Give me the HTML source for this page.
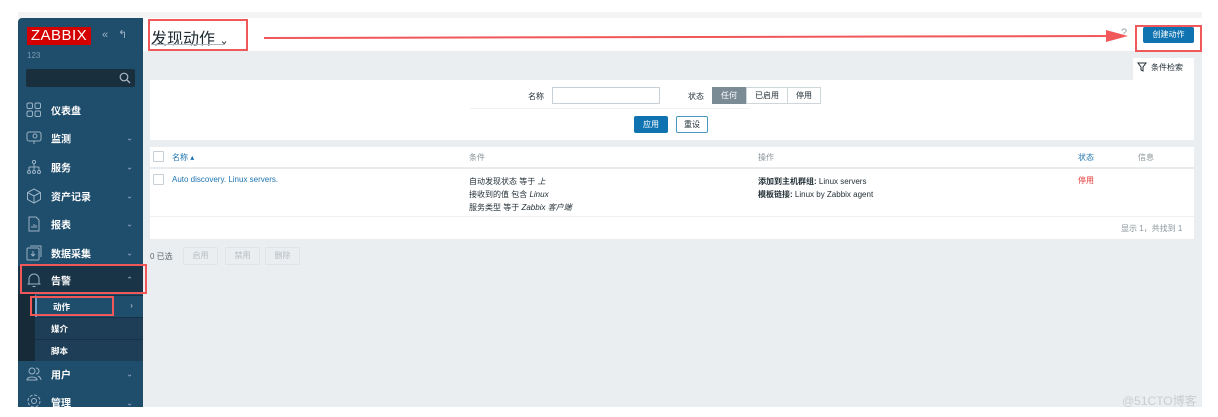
<!DOCTYPE html>
<html><head><meta charset="utf-8">
<style>
*{margin:0;padding:0;box-sizing:border-box}
body{width:1218px;height:417px;background:#fff;position:relative;overflow:hidden;font-family:"Liberation Sans","Noto Sans CJK SC",sans-serif;font-size:9px;color:#1f2c33}
.abs{position:absolute}
#strip{left:18px;top:12px;width:1184px;height:6px;background:#f4f4f4}
#side{left:18px;top:18px;width:125px;height:389px;background:#1f4d6c;border-radius:4px 0 0 0}
#logo{left:27px;top:27px;width:64px;height:18px;background:#d40000;color:#fff;font-size:15px;line-height:18px;text-align:center;letter-spacing:0.5px}
.mi{position:absolute;left:18px;width:125px;height:28px;color:#fff;font-size:10px;font-weight:bold}
.mi span{position:absolute;left:33px;top:50%;transform:translateY(-50%)}
.mi i{position:absolute;right:10px;top:50%;transform:translateY(-50%);font-style:normal;color:#9bb3c5;font-size:8px;font-weight:normal}
.mi svg{position:absolute;left:8px;top:50%;transform:translateY(-50%)}
.sub{position:absolute;left:35px;width:108px;height:22px;color:#fff;font-size:8.5px;font-weight:bold;background:#1d3e56;border-top:1px solid #173247}
.sub span{position:absolute;left:16px;top:5px}
#main{left:143px;top:18px;width:1059px;height:389px;background:#ebeef0}
#head{left:143px;top:18px;width:1059px;height:33px;background:#fff}
.white{background:#fff}
.btn{position:absolute;font-size:8px;text-align:center;border-radius:2px}
.red{position:absolute;border:2px solid #f0585a}
.cb{position:absolute;width:11px;height:11px;border:1px solid #c8d0d6;background:#fff;border-radius:1px}
.gbtn{position:absolute;top:247px;height:18px;border:1px solid #dfe4e7;background:#ebeef0;color:#b6bdc2;font-size:8px;line-height:16px;text-align:center;border-radius:2px}
</style></head><body>
<div class="abs" id="strip"></div>
<div class="abs" id="main"></div>
<div class="abs" id="head"></div>
<div class="abs" id="side"></div>
<div class="abs" id="logo">ZABBIX</div>
<div class="abs" style="left:102px;top:29px;color:#9bb3c5;font-size:11px">«</div>
<div class="abs" style="left:118px;top:28px;color:#9bb3c5;font-size:11px">↰</div>
<div class="abs" style="left:27px;top:51px;color:#7f9cb2;font-size:8px">123</div>
<div class="abs" style="left:26px;top:69px;width:109px;height:18px;background:#1a2f3e;border-radius:2px"></div>
<svg class="abs" style="left:119px;top:72px" width="12" height="12"><circle cx="5" cy="5" r="3.8" fill="none" stroke="#aab9c5" stroke-width="1.2"/><line x1="8" y1="8" x2="11" y2="11" stroke="#aab9c5" stroke-width="1.3"/></svg>

<div class="mi" style="top:96px"><svg width="16" height="16"><g fill="none" stroke="#9bb3c5"><rect x="1" y="1" width="5.5" height="5.5" rx="1.5"/><rect x="9" y="1" width="5.5" height="5.5" rx="1.5"/><rect x="1" y="9" width="5.5" height="5.5" rx="1.5"/><rect x="9" y="9" width="5.5" height="5.5" rx="1.5"/></g></svg><span>仪表盘</span></div>
<div class="mi" style="top:124px"><svg width="16" height="16"><g fill="none" stroke="#9bb3c5"><rect x="1" y="2" width="14" height="9" rx="2"/><circle cx="9" cy="6" r="2"/><line x1="8" y1="14" x2="8" y2="11"/></g></svg><span>监测</span><i>⌄</i></div>
<div class="mi" style="top:153px"><svg width="16" height="16"><g fill="none" stroke="#9bb3c5"><circle cx="8" cy="3" r="1.6"/><path d="M8 5v3M3 8h10M3 8v3M8 8v3M13 8v3"/><circle cx="3" cy="13" r="1.5"/><circle cx="8" cy="13" r="1.5"/><circle cx="13" cy="13" r="1.5"/></g></svg><span>服务</span><i>⌄</i></div>
<div class="mi" style="top:182px"><svg width="16" height="16"><g fill="none" stroke="#9bb3c5"><path d="M8 1l6.5 3.5v7L8 15 1.5 11.5v-7z M1.5 4.5L8 8l6.5-3.5M8 8v7"/></g></svg><span>资产记录</span><i>⌄</i></div>
<div class="mi" style="top:210px"><svg width="16" height="16"><g fill="none" stroke="#9bb3c5"><path d="M3 1h7l3 3v11H3z"/><path d="M6 12v-2M8 12V8M10 12v-3"/></g></svg><span>报表</span><i>⌄</i></div>
<div class="mi" style="top:239px"><svg width="16" height="16"><g fill="none" stroke="#9bb3c5"><rect x="1" y="3" width="12" height="12" rx="1"/><path d="M4 1h11v11"/><path d="M7 6v5M5 9l2 2 2-2"/></g></svg><span>数据采集</span><i>⌄</i></div>
<div class="mi" style="top:266px;height:28px;background:#1a3447"><svg width="16" height="16"><g fill="none" stroke="#9bb3c5"><path d="M3 12V7a5 5 0 0 1 10 0v5h1.5H1.5zM6.5 14.5h3"/></g></svg><span>告警</span><i>⌃</i></div>
<div class="abs" style="left:18px;top:294px;width:17px;height:67px;background:#172a38"></div>
<div class="sub" style="top:295px;background:#1f4d6c;border-left:2px solid #6aa2cf"><span>动作</span><i style="position:absolute;right:10px;top:4px;font-style:normal;color:#9bb3c5">›</i></div>
<div class="sub" style="top:317px"><span>媒介</span></div>
<div class="sub" style="top:339px"><span>脚本</span></div>
<div class="mi" style="top:360px"><svg width="16" height="16"><g fill="none" stroke="#9bb3c5"><circle cx="6" cy="5" r="3"/><path d="M1 14c0-4 10-4 10 0zM10 2a3 3 0 0 1 0 6M12 10c2 1 3 2 3 4"/></g></svg><span>用户</span><i>⌄</i></div>
<div class="mi" style="top:389px;height:18px;overflow:hidden"><svg width="16" height="16" style="top:12px"><g fill="none" stroke="#9bb3c5"><circle cx="8" cy="8" r="2.5"/><circle cx="8" cy="8" r="6" stroke-dasharray="3 1.7"/></g></svg><span style="top:13px">管理</span><i style="top:14px">⌄</i></div>

<!-- header -->
<div class="abs" style="left:151px;top:25px;font-size:16px;color:#1f2c33">发现动作 <span style="font-size:11px">⌄</span></div>
<div class="abs" style="left:151px;top:44px;width:74px;height:1px;background:#b0b7bc"></div>
<div class="abs" style="left:1121px;top:27px;color:#9aa3a8;font-size:11px">?</div>
<div class="btn" style="left:1143px;top:27px;width:51px;height:16px;background:#0f73b1;color:#fff;line-height:16px">创建动作</div>

<!-- filter -->
<div class="abs white" style="left:1133px;top:58px;width:61px;height:23px"></div>
<svg class="abs" style="left:1137px;top:62px" width="10" height="10"><path d="M1 1h8L6 5v4L4 8V5z" fill="none" stroke="#1f2c33" stroke-width="1"/></svg>
<div class="abs" style="left:1151px;top:62px;font-size:8px">条件检索</div>
<div class="abs white" style="left:150px;top:80px;width:1044px;height:60px"></div>
<div class="abs" style="left:528px;top:91px;font-size:8px">名称</div>
<div class="abs" style="left:552px;top:87px;width:108px;height:17px;border:1px solid #c8d0d6;background:#fff"></div>
<div class="abs" style="left:470px;top:108px;width:280px;height:1px;background:#eef1f3"></div>
<div class="abs" style="left:688px;top:91px;font-size:8px">状态</div>
<div class="btn" style="left:712px;top:87px;width:34px;height:17px;background:#7a8b96;color:#fff;line-height:17px;border-radius:0">任何</div>
<div class="btn" style="left:746px;top:87px;width:42px;height:17px;border:1px solid #cfd6da;line-height:15px;border-radius:0">已启用</div>
<div class="btn" style="left:787px;top:87px;width:34px;height:17px;border:1px solid #cfd6da;line-height:15px;border-radius:0">停用</div>
<div class="btn" style="left:634px;top:116px;width:34px;height:17px;background:#0f73b1;color:#fff;line-height:17px">应用</div>
<div class="btn" style="left:676px;top:116px;width:32px;height:17px;border:1px solid #4796c4;color:#1f2c33;line-height:15px">重设</div>

<!-- table -->
<div class="abs white" style="left:150px;top:147px;width:1044px;height:92px"></div>
<div class="abs" style="left:150px;top:167px;width:1044px;height:2px;background:#e8ecee"></div>
<div class="abs" style="left:150px;top:216px;width:1044px;height:1px;background:#eef1f3"></div>
<div class="cb" style="left:153px;top:151px"></div>
<div class="abs" style="left:172px;top:152px;color:#1f74b0;font-size:8px">名称 ▴</div>
<div class="abs" style="left:469px;top:152px;color:#8a949a;font-size:8px">条件</div>
<div class="abs" style="left:758px;top:152px;color:#8a949a;font-size:8px">操作</div>
<div class="abs" style="left:1078px;top:152px;color:#1f74b0;font-size:8px">状态</div>
<div class="abs" style="left:1138px;top:152px;color:#8a949a;font-size:8px">信息</div>
<div class="cb" style="left:153px;top:174px"></div>
<div class="abs" style="left:172px;top:175px;color:#1f74b0;font-size:8px">Auto discovery. Linux servers.</div>
<div class="abs" style="left:469px;top:175px;font-size:8px;line-height:13px">自动发现状态 等于 <i>上</i><br>接收到的值 包含 <i>Linux</i><br>服务类型 等于 <i>Zabbix 客户端</i></div>
<div class="abs" style="left:758px;top:175px;font-size:8px;line-height:13px"><b>添加到主机群组:</b> Linux servers<br><b>模板链接:</b> Linux by Zabbix agent</div>
<div class="abs" style="left:1078px;top:175px;color:#e33734;font-size:8px">停用</div>
<div class="abs" style="left:1121px;top:223px;color:#8a949a;font-size:8px">显示 1，共找到 1</div>

<div class="abs" style="left:150px;top:251px;font-size:8px;color:#5d6870">0 已选</div>
<div class="gbtn" style="left:183px;width:35px">启用</div>
<div class="gbtn" style="left:225px;width:35px">禁用</div>
<div class="gbtn" style="left:265px;width:35px">删除</div>

<!-- annotations -->
<div class="red" style="left:148px;top:19px;width:100px;height:32px"></div>
<div class="red" style="left:20px;top:264px;width:127px;height:30px"></div>
<div class="red" style="left:30px;top:296px;width:84px;height:20px"></div>
<div class="red" style="left:1135px;top:25px;width:67px;height:27px"></div>
<svg class="abs" style="left:260px;top:28px" width="880" height="18"><line x1="4" y1="10" x2="855" y2="8" stroke="#f0585a" stroke-width="2"/><path d="M846 2L868 8L846 14z" fill="#f0585a"/></svg>
<div class="abs" style="left:1122px;top:392px;color:#c9cdd0;font-size:12px">@51CTO博客</div>
</body></html>
